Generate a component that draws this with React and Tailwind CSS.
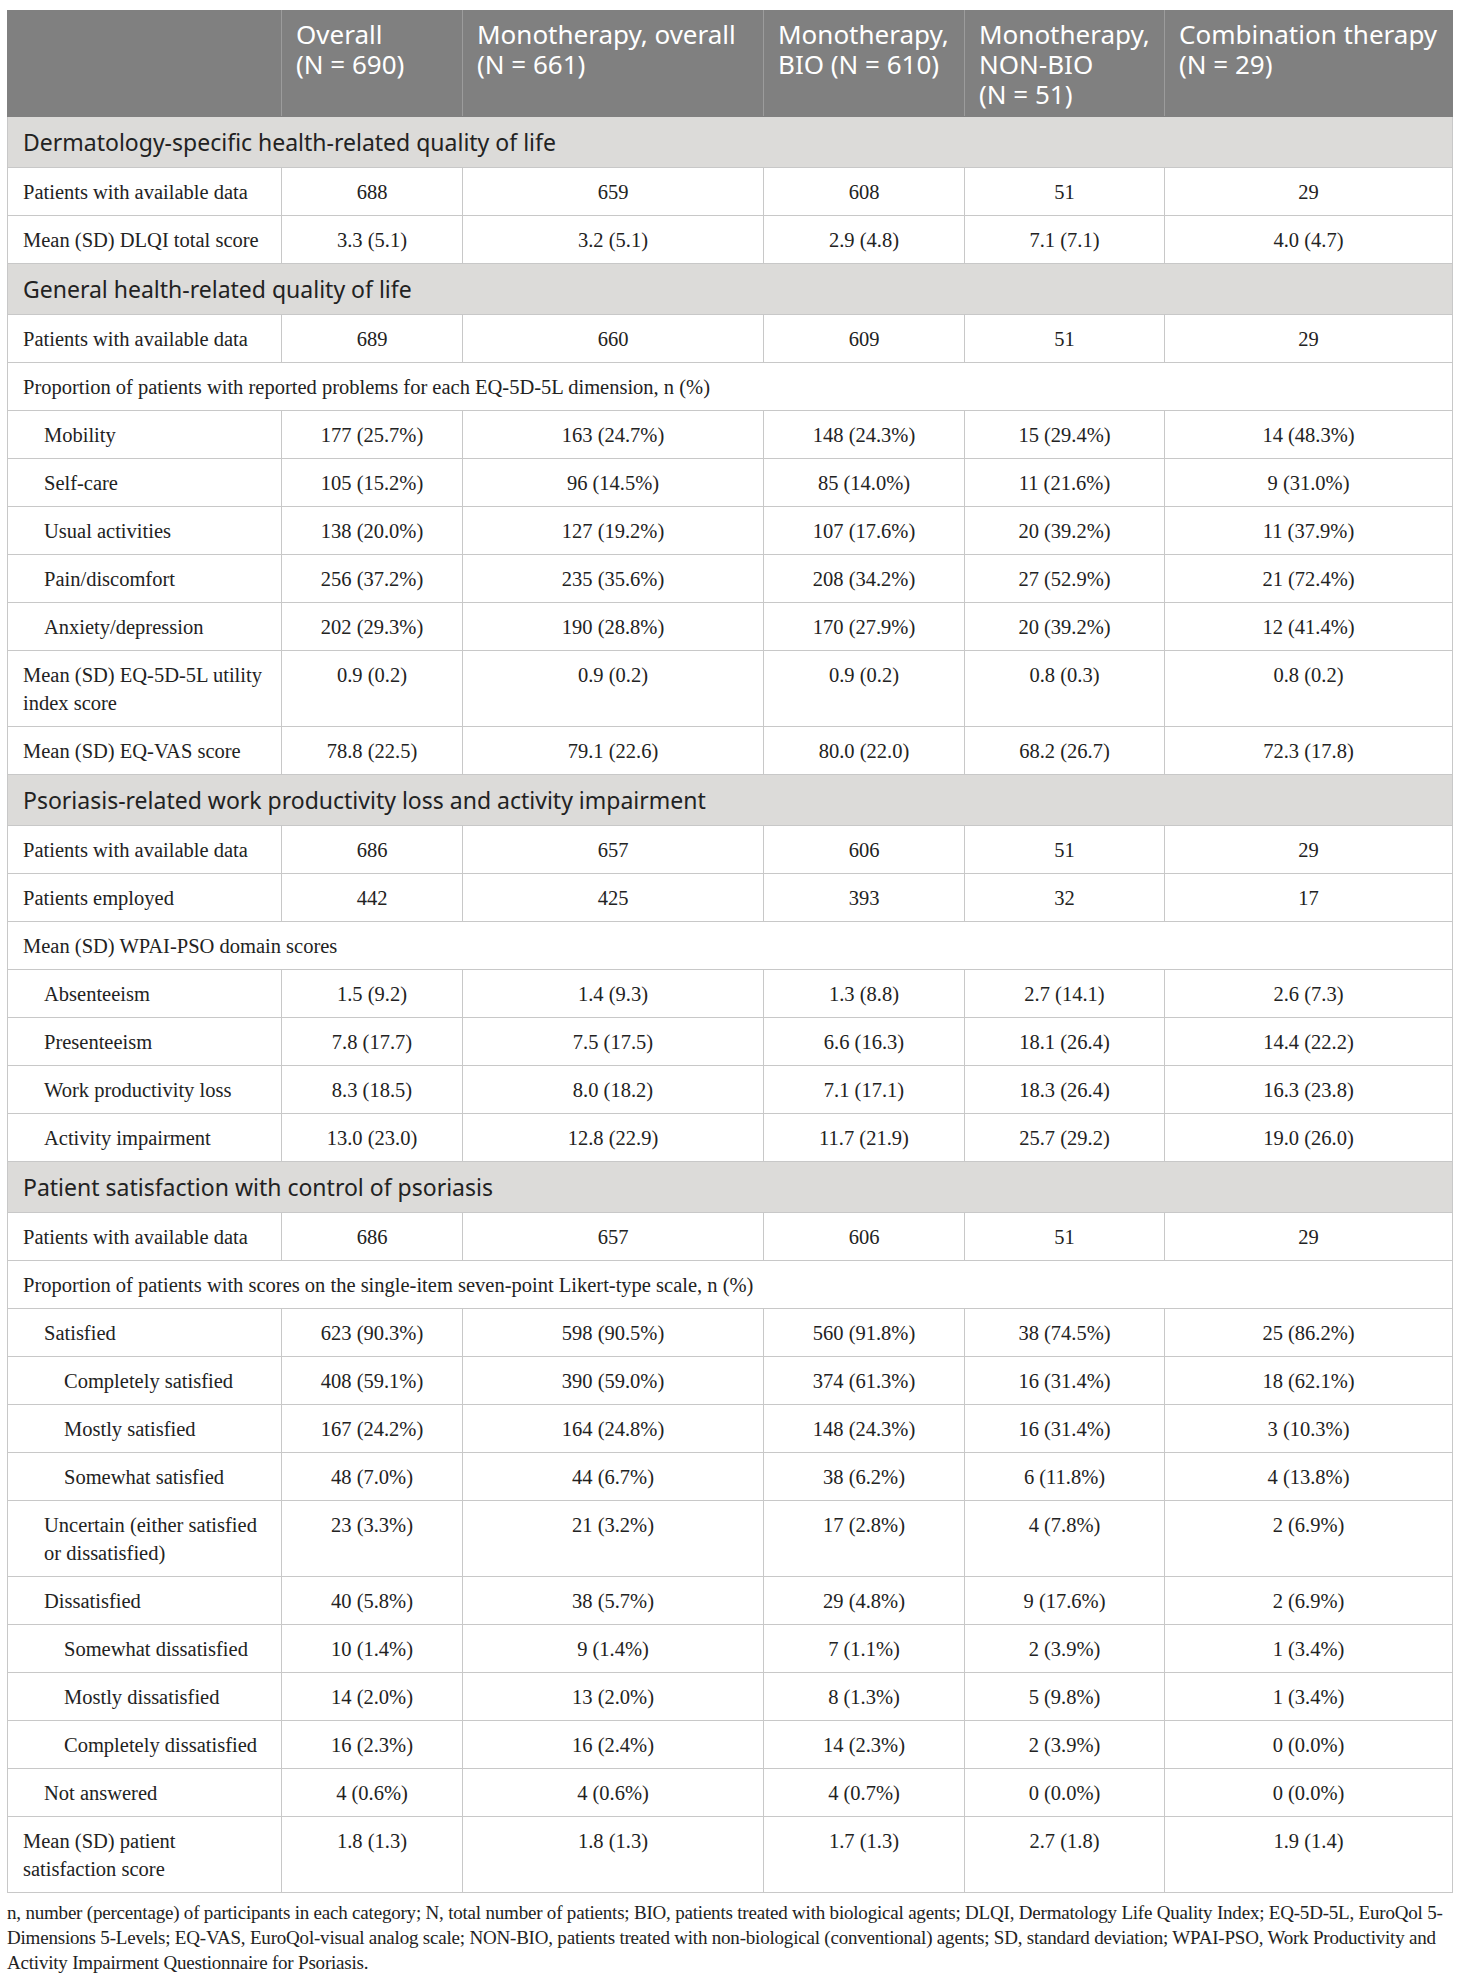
import React from 'react';

const cols = [274, 181, 301, 201, 200, 288];

const headers = [
  ['Overall', '(N = 690)'],
  ['Monotherapy, overall', '(N = 661)'],
  ['Monotherapy,', 'BIO (N = 610)'],
  ['Monotherapy,', 'NON-BIO', '(N = 51)'],
  ['Combination therapy', '(N = 29)'],
];

// type: section | span | row ; indent 0/1/2
const rows = [
  { type: 'section', label: 'Dermatology-specific health-related quality of life' },
  { label: 'Patients with available data', v: ['688', '659', '608', '51', '29'] },
  { label: 'Mean (SD) DLQI total score', v: ['3.3 (5.1)', '3.2 (5.1)', '2.9 (4.8)', '7.1 (7.1)', '4.0 (4.7)'] },
  { type: 'section', label: 'General health-related quality of life' },
  { label: 'Patients with available data', v: ['689', '660', '609', '51', '29'] },
  { type: 'span', label: 'Proportion of patients with reported problems for each EQ-5D-5L dimension, n (%)' },
  { label: 'Mobility', indent: 1, v: ['177 (25.7%)', '163 (24.7%)', '148 (24.3%)', '15 (29.4%)', '14 (48.3%)'] },
  { label: 'Self-care', indent: 1, v: ['105 (15.2%)', '96 (14.5%)', '85 (14.0%)', '11 (21.6%)', '9 (31.0%)'] },
  { label: 'Usual activities', indent: 1, v: ['138 (20.0%)', '127 (19.2%)', '107 (17.6%)', '20 (39.2%)', '11 (37.9%)'] },
  { label: 'Pain/discomfort', indent: 1, v: ['256 (37.2%)', '235 (35.6%)', '208 (34.2%)', '27 (52.9%)', '21 (72.4%)'] },
  { label: 'Anxiety/depression', indent: 1, v: ['202 (29.3%)', '190 (28.8%)', '170 (27.9%)', '20 (39.2%)', '12 (41.4%)'] },
  { label: 'Mean (SD) EQ-5D-5L utility index score', v: ['0.9 (0.2)', '0.9 (0.2)', '0.9 (0.2)', '0.8 (0.3)', '0.8 (0.2)'] },
  { label: 'Mean (SD) EQ-VAS score', v: ['78.8 (22.5)', '79.1 (22.6)', '80.0 (22.0)', '68.2 (26.7)', '72.3 (17.8)'] },
  { type: 'section', label: 'Psoriasis-related work productivity loss and activity impairment' },
  { label: 'Patients with available data', v: ['686', '657', '606', '51', '29'] },
  { label: 'Patients employed', v: ['442', '425', '393', '32', '17'] },
  { type: 'span', label: 'Mean (SD) WPAI-PSO domain scores' },
  { label: 'Absenteeism', indent: 1, v: ['1.5 (9.2)', '1.4 (9.3)', '1.3 (8.8)', '2.7 (14.1)', '2.6 (7.3)'] },
  { label: 'Presenteeism', indent: 1, v: ['7.8 (17.7)', '7.5 (17.5)', '6.6 (16.3)', '18.1 (26.4)', '14.4 (22.2)'] },
  { label: 'Work productivity loss', indent: 1, v: ['8.3 (18.5)', '8.0 (18.2)', '7.1 (17.1)', '18.3 (26.4)', '16.3 (23.8)'] },
  { label: 'Activity impairment', indent: 1, v: ['13.0 (23.0)', '12.8 (22.9)', '11.7 (21.9)', '25.7 (29.2)', '19.0 (26.0)'] },
  { type: 'section', label: 'Patient satisfaction with control of psoriasis' },
  { label: 'Patients with available data', v: ['686', '657', '606', '51', '29'] },
  { type: 'span', label: 'Proportion of patients with scores on the single-item seven-point Likert-type scale, n (%)' },
  { label: 'Satisfied', indent: 1, v: ['623 (90.3%)', '598 (90.5%)', '560 (91.8%)', '38 (74.5%)', '25 (86.2%)'] },
  { label: 'Completely satisfied', indent: 2, v: ['408 (59.1%)', '390 (59.0%)', '374 (61.3%)', '16 (31.4%)', '18 (62.1%)'] },
  { label: 'Mostly satisfied', indent: 2, v: ['167 (24.2%)', '164 (24.8%)', '148 (24.3%)', '16 (31.4%)', '3 (10.3%)'] },
  { label: 'Somewhat satisfied', indent: 2, v: ['48 (7.0%)', '44 (6.7%)', '38 (6.2%)', '6 (11.8%)', '4 (13.8%)'] },
  { label: 'Uncertain (either satisfied or dissatisfied)', indent: 1, v: ['23 (3.3%)', '21 (3.2%)', '17 (2.8%)', '4 (7.8%)', '2 (6.9%)'] },
  { label: 'Dissatisfied', indent: 1, v: ['40 (5.8%)', '38 (5.7%)', '29 (4.8%)', '9 (17.6%)', '2 (6.9%)'] },
  { label: 'Somewhat dissatisfied', indent: 2, v: ['10 (1.4%)', '9 (1.4%)', '7 (1.1%)', '2 (3.9%)', '1 (3.4%)'] },
  { label: 'Mostly dissatisfied', indent: 2, v: ['14 (2.0%)', '13 (2.0%)', '8 (1.3%)', '5 (9.8%)', '1 (3.4%)'] },
  { label: 'Completely dissatisfied', indent: 2, v: ['16 (2.3%)', '16 (2.4%)', '14 (2.3%)', '2 (3.9%)', '0 (0.0%)'] },
  { label: 'Not answered', indent: 1, v: ['4 (0.6%)', '4 (0.6%)', '4 (0.7%)', '0 (0.0%)', '0 (0.0%)'] },
  { label: 'Mean (SD) patient satisfaction score', v: ['1.8 (1.3)', '1.8 (1.3)', '1.7 (1.3)', '2.7 (1.8)', '1.9 (1.4)'] },
];

const indentClass = ['pl-[15px]', 'pl-[36px]', 'pl-[56px]'];

const sans = { fontFamily: '"Noto Sans", "Open Sans", sans-serif' };
const serif = { fontFamily: '"Liberation Serif", "Times New Roman", serif' };

export default function App() {
  return (
    <div className="bg-white pl-[7px] pt-[10px] pb-4 w-[1460px] text-[#222]">
      <table className="table-fixed border-collapse w-[1445px]">
        <colgroup>
          {cols.map((w, i) => (
            <col key={i} style={{ width: w }} />
          ))}
        </colgroup>
        <thead>
          <tr className="bg-[#808080] text-white align-top" style={sans}>
            <th className="border border-[#808080] border-r-[#9c9c9c]" />
            {headers.map((h, i) => (
              <th
                key={i}
                className="border border-[#808080] border-l-[#9c9c9c] border-r-[#9c9c9c] last:border-r-[#808080] text-left font-normal text-[26px] leading-[30px] pt-[8px] pb-[7px] pl-[14px] pr-2"
              >
                {h.map((line, j) => (
                  <div key={j} className="whitespace-nowrap">{line}</div>
                ))}
              </th>
            ))}
          </tr>
        </thead>
        <tbody>
          {rows.map((r, i) => {
            if (r.type === 'section') {
              return (
                <tr key={i} className="bg-[#dcdbd9]">
                  <td colSpan={6} className="border border-[#c8c8c8] text-[23px] leading-[30px] pt-[10px] pb-[10px] pl-[15px]" style={sans}>
                    {r.label}
                  </td>
                </tr>
              );
            }
            if (r.type === 'span') {
              return (
                <tr key={i}>
                  <td colSpan={6} className="border border-[#c8c8c8] text-[20.5px] leading-[28px] pt-[10px] pb-[9px] pl-[15px]" style={serif}>
                    {r.label}
                  </td>
                </tr>
              );
            }
            return (
              <tr key={i} className="align-top text-[20.5px] leading-[28px]" style={serif}>
                <td className={`border border-[#c8c8c8] pt-[10px] pb-[9px] pr-[16px] ${indentClass[r.indent || 0]}`}>{r.label}</td>
                {r.v.map((v, j) => (
                  <td key={j} className="border border-[#c8c8c8] pt-[10px] pb-[9px] text-center">
                    {v}
                  </td>
                ))}
              </tr>
            );
          })}
        </tbody>
      </table>
      <p className="w-[1445px] text-[19px] leading-[25px] tracking-[-0.2px] mt-[7px]" style={serif}>
        n, number (percentage) of participants in each category; N, total number of patients; BIO, patients treated with biological agents; DLQI, Dermatology Life Quality Index; EQ-5D-5L, EuroQol 5-Dimensions 5-Levels; EQ-VAS, EuroQol-visual analog scale; NON-BIO, patients treated with non-biological (conventional) agents; SD, standard deviation; WPAI-PSO, Work Productivity and Activity Impairment Questionnaire for Psoriasis.
      </p>
    </div>
  );
}
